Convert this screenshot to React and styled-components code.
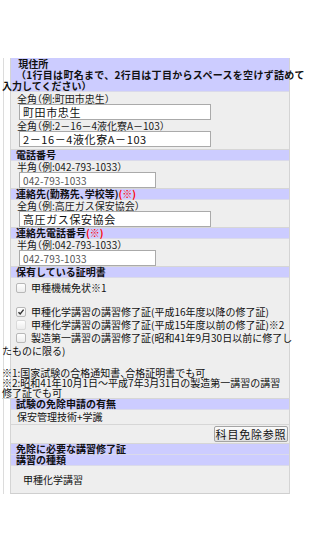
import React from "react";
import styled, { createGlobalStyle } from "styled-components";

const Global = createGlobalStyle`
  html, body { margin: 0; padding: 0; background: #fff; }
  body {
    font-family: "Noto Sans CJK JP", "Noto Sans", sans-serif;
    font-size: 10px;
    color: #111;
    font-feature-settings: "halt";
  }
`;

const Page = styled.div`
  padding-top: 58px;
  width: 300px;
`;

const Frame = styled.div`
  margin-left: 3px;
  border-left: 1px solid #dcdcdc;
  padding-left: 6px;
  width: 280px;
`;

const Panel = styled.div`
  width: 280px;
  box-sizing: border-box;
  background: #eeeeee;
  border-left: 1px solid #d4d4d4;
  border-right: 1px solid #d4d4d4;
  border-bottom: 1px solid #cfcfcf;
`;

const Head = styled.div`
  background: #ccccff;
  font-weight: bold;
  line-height: ${(p) => p.$lh || 10}px;
  padding-left: 5px;
  border-bottom: 1px solid #dadaea;
  white-space: nowrap;
`;

const Wide = styled.span`
  font-feature-settings: normal;
  letter-spacing: 0.3px;
`;

const Pull = styled.span`
  display: block;
  margin-left: -14px;
`;

const Red = styled.span`
  color: #ff0000;
`;

const Body = styled.div`
  padding: ${(p) => p.$pad || "0 0 0 6px"};
  border-bottom: 1px solid #d6d6d6;
`;

const Label = styled.div`
  line-height: 11px;
  white-space: nowrap;
  color: #1a1a1a;
`;

const TextBox = styled.input`
  display: block;
  box-sizing: border-box;
  width: ${(p) => p.$w}px;
  height: 16px;
  margin: 0 0 0 2px;
  padding: 0 3px;
  border: 1px solid #aaaaaa;
  background: #fff;
  font-family: "Noto Sans CJK JP", sans-serif;
  font-size: ${(p) => (p.$half ? 10 : 11)}px;
  letter-spacing: ${(p) => (p.$half ? 0.1 : 0.6)}px;
  color: ${(p) => (p.$half ? "#555" : "#111")};
  outline: none;
`;

const CheckList = styled.div`
  margin-left: -9px;
  padding-top: 3px;
  border-bottom: 1px solid #d6d6d6;
  width: 288px;
`;

const CheckLine = styled.div`
  line-height: 13px;
  white-space: nowrap;
`;

const Blank = styled.div`
  height: 11px;
`;

const Box = styled.span`
  display: inline-block;
  box-sizing: border-box;
  width: 10px;
  height: 10px;
  margin: 0 5px 0 14px;
  vertical-align: -1px;
  border: 1px solid ${(p) => (p.$faint ? "#dadada" : "#b8b8b8")};
  border-radius: 2px;
  background: linear-gradient(#ffffff, #ececec);
  position: relative;
`;

const Tick = styled.svg`
  position: absolute;
  left: 0px;
  top: 0px;
`;

const Note = styled.div`
  line-height: 10px;
  white-space: nowrap;
`;

const Plain = styled.div`
  line-height: 14px;
  padding-left: 6px;
  border-bottom: 1px solid #d6d6d6;
`;

const ButtonRow = styled.div`
  display: flex;
  justify-content: flex-end;
  padding: 1px 1px 1px 0;
  border-bottom: 1px solid #d6d6d6;
`;

const Button = styled.button`
  width: 74px;
  height: 16px;
  box-sizing: border-box;
  padding: 0;
  border: 1px solid #a4a4a4;
  border-radius: 2px;
  background: linear-gradient(#fbfbfb, #dedede);
  font-family: "Noto Sans CJK JP", sans-serif;
  font-size: 11px;
  line-height: 14px;
  letter-spacing: 0.8px;
  text-align: center;
  color: #111;
`;

const Final = styled.div`
  line-height: 27px;
  padding-left: 12px;
`;

function Check({ checked, faint, children }) {
  return (
    <CheckLine>
      <Box $faint={faint}>
        {checked && (
          <Tick width="8" height="8" viewBox="0 0 8 8">
            <path d="M1.5 4.2 L3.2 6 L6.6 1.6" fill="none" stroke="#333" strokeWidth="1.4" />
          </Tick>
        )}
      </Box>
      {children}
    </CheckLine>
  );
}

export default function App() {
  return (
    <>
      <Global />
      <Page>
        <Frame>
          <Panel>
            <Head $lh={11}>
              &nbsp;現住所
              <br />
              <Wide>（1行目は町名まで、2行目は丁目からスペースを空けず詰めて</Wide>
              <Pull>入力してください）</Pull>
            </Head>
            <Body $pad="1px 0 2px 6px">
              <Label>全角（例:町田市忠生）</Label>
              <TextBox $w={192} readOnly value="町田市忠生" />
              <Label>全角（例:2－16－4液化寮A－103）</Label>
              <TextBox $w={192} readOnly value="2－16－4液化寮A－103" />
            </Body>
            <Head>電話番号</Head>
            <Body>
              <Label>半角（例:042-793-1033）</Label>
              <TextBox $w={137} $half readOnly value="042-793-1033" />
            </Body>
            <Head>
              連絡先(勤務先、学校等)<Red>(※)</Red>
            </Head>
            <Body>
              <Label>全角（例:高圧ガス保安協会）</Label>
              <TextBox $w={192} readOnly value="高圧ガス保安協会" />
            </Body>
            <Head>
              連絡先電話番号<Red>(※)</Red>
            </Head>
            <Body>
              <Label>半角（例:042-793-1033）</Label>
              <TextBox $w={137} $half readOnly value="042-793-1033" />
            </Body>
            <Head>保有している証明書</Head>
            <CheckList>
              <Check>甲種機械免状※1</Check>
              <Blank />
              <Check checked>甲種化学講習の講習修了証(平成16年度以降の修了証)</Check>
              <Check faint>甲種化学講習の講習修了証(平成15年度以前の修了証)※2</Check>
              <Check>製造第一講習の講習修了証(昭和41年9月30日以前に修了し</Check>
              <CheckLine>たものに限る)</CheckLine>
              <Blank />
              <Note>※1:国家試験の合格通知書、合格証明書でも可</Note>
              <Note>※2:昭和41年10月1日～平成7年3月31日の製造第一講習の講習</Note>
              <Note>修了証でも可</Note>
            </CheckList>
            <Head>試験の免除申請の有無</Head>
            <Plain>保安管理技術+学識</Plain>
            <ButtonRow>
              <Button type="button">科目免除参照</Button>
            </ButtonRow>
            <Head>免除に必要な講習修了証</Head>
            <Head>講習の種類</Head>
            <Final>甲種化学講習</Final>
          </Panel>
        </Frame>
      </Page>
    </>
  );
}
